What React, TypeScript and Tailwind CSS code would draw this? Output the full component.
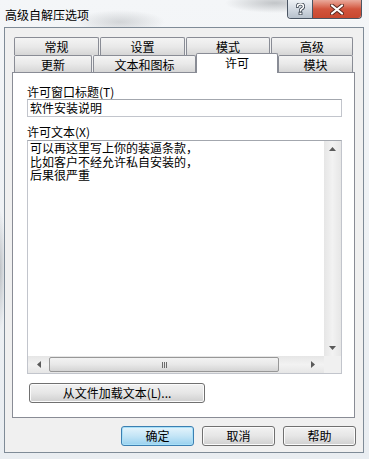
import React from 'react';

const FONT = "font-['SimSun','Noto_Sans_CJK_SC',sans-serif]";

function Tab({ label, w, ml = '' }: { label: string; w: string; ml?: string }) {
  return (
    <div
      className={`${w} ${ml} flex h-full items-center justify-center rounded-t-[2px] border border-b-0 border-[#898c95] bg-gradient-to-b from-[#f4f4f4] via-[#e9e9e9] to-[#d6d6d6] pt-[1px]`}
    >
      {label}
    </div>
  );
}

function WinButton({ label, primary = false, w }: { label: string; primary?: boolean; w: string }) {
  return (
    <div
      className={`${w} flex h-[20px] items-center justify-center rounded-[3px] border ${
        primary
          ? 'border-[#3c7fb1] bg-gradient-to-b from-[#e5f4fc] via-[#c4e5f6] to-[#98d1ef] shadow-[inset_0_0_0_1px_#a8e0f8]'
          : 'border-[#707070] bg-gradient-to-b from-[#f2f2f2] via-[#e6e6e6] to-[#cfcfcf] shadow-[inset_0_0_0_1px_#fbfbfb]'
      }`}
    >
      {label}
    </div>
  );
}

function Arrow({ dir }: { dir: 'up' | 'down' | 'left' | 'right' }) {
  const pts = {
    up: '0,4 3.5,0 7,4',
    down: '0,0 3.5,4 7,0',
    left: '4,0 0,3.5 4,7',
    right: '0,0 4,3.5 0,7',
  }[dir];
  const vertical = dir === 'up' || dir === 'down';
  return (
    <svg width={vertical ? 7 : 4} height={vertical ? 4 : 7} viewBox={vertical ? '0 0 7 4' : '0 0 4 7'}>
      <polygon points={pts} fill="#5a5a5a" />
    </svg>
  );
}

export default function App() {
  return (
    <div
      className={`${FONT} flex h-[459px] w-[369px] flex-col overflow-hidden text-[12px] leading-[14px] text-black bg-[radial-gradient(ellipse_45px_12px_at_120px_22px,rgba(110,115,120,0.25),transparent),radial-gradient(ellipse_50px_10px_at_275px_3px,rgba(100,105,110,0.35),transparent),radial-gradient(ellipse_6px_60px_at_0px_270px,rgba(100,105,110,0.35),transparent),linear-gradient(180deg,#f4f6f8,#e9edf1)]`}
    >
      {/* title bar */}
      <div className="flex h-[27px] shrink-0 items-start">
        <div className="pl-[5px] pt-[8px] text-[12px] leading-[14px] text-black">高级自解压选项</div>
        <div className="ml-auto mr-[7px] flex h-[19px] overflow-hidden rounded-b-[4px] border border-t-0 border-[#4a5563] shadow-[0_1px_1px_rgba(255,255,255,0.8)]">
          <div className="flex w-[25px] items-center justify-center border-r border-[#4a5563] bg-gradient-to-b from-[#eef2f6] via-[#d3dae2] to-[#b7c1cc]">
            <svg width="9" height="12" viewBox="0 0 9 12">
              <path
                d="M1.5 3.5 Q1.5 1 4.5 1 Q7.5 1 7.5 3.5 Q7.5 5 5.5 6 Q4.5 6.5 4.5 8"
                fill="none"
                stroke="#3a4450"
                strokeWidth="3.2"
                strokeLinecap="round"
              />
              <path
                d="M1.5 3.5 Q1.5 1 4.5 1 Q7.5 1 7.5 3.5 Q7.5 5 5.5 6 Q4.5 6.5 4.5 8"
                fill="none"
                stroke="#fff"
                strokeWidth="1.6"
                strokeLinecap="round"
              />
              <rect x="3" y="9.2" width="3" height="2.6" fill="#fff" stroke="#3a4450" strokeWidth="0.8" />
            </svg>
          </div>
          <div className="flex w-[48px] items-center justify-center bg-gradient-to-b from-[#e9a99b] via-[#d2543d] to-[#c8482f]">
            <svg width="14" height="11" viewBox="0 0 14 11">
              <path d="M2 1.5 L12 9.5 M12 1.5 L2 9.5" stroke="#5a2a22" strokeWidth="4" strokeLinecap="round" />
              <path d="M2 1.5 L12 9.5 M12 1.5 L2 9.5" stroke="#fff" strokeWidth="2.2" strokeLinecap="round" />
            </svg>
          </div>
        </div>
      </div>

      {/* client area */}
      <div className="ml-[4px] flex h-[426px] w-[360px] shrink-0 flex-col border border-[#7f8b97] bg-[#f0f0f0]">
        <div className="ml-[7px] mt-[9px] flex w-[343px] flex-col">
          {/* back row */}
          <div className="flex h-[18px] gap-[1px] pl-[2px]">
            <Tab label="常规" w="w-[85px]" />
            <Tab label="设置" w="w-[85px]" />
            <Tab label="模式" w="w-[84px]" />
            <Tab label="高级" w="w-[82px]" />
          </div>
          {/* front row */}
          <div className="flex h-[17px] items-end pl-[2px]">
            <Tab label="更新" w="w-[78px]" />
            <Tab label="文本和图标" w="w-[103px]" ml="ml-[1px]" />
            <div className="relative z-10 -mb-[1px] flex h-[20px] w-[82px] items-start justify-center rounded-t-[2px] border border-b-0 border-[#898c95] bg-white pt-[2px]">
              许可
            </div>
            <Tab label="模块" w="w-[75px]" />
          </div>

          {/* panel */}
          <div className="flex h-[346px] flex-col border border-[#898c95] bg-white pl-[14px]">
            <div className="mt-[12px] h-[14px]">许可窗口标题(T)</div>
            <div className="flex h-[18px] w-[315px] items-center border border-[#c2c5cc] border-t-[#a3a7ae] pl-[2px]">
              软件安装说明
            </div>
            <div className="mt-[8px] h-[14px]">许可文本(X)</div>
            <div className="mt-[1px] grid h-[234px] w-[315px] grid-cols-[1fr_17px] grid-rows-[1fr_17px] border border-[#c2c5cc] border-t-[#a3a7ae]">
              <div className="pl-[2px] leading-[13.5px]">
                可以再这里写上你的装逼条款，
                <br />
                比如客户不经允许私自安装的，
                <br />
                后果很严重
              </div>
              {/* vertical scrollbar */}
              <div className="flex flex-col items-center justify-between bg-gradient-to-r from-[#e6e6e6] via-[#f2f2f2] to-[#e6e6e6] py-[6px]">
                <Arrow dir="up" />
                <Arrow dir="down" />
              </div>
              {/* horizontal scrollbar */}
              <div className="flex items-center bg-gradient-to-b from-[#e6e6e6] via-[#f2f2f2] to-[#e6e6e6]">
                <div className="flex w-[21px] justify-center">
                  <Arrow dir="left" />
                </div>
                <div className="flex h-[15px] w-[230px] items-center justify-center rounded-[2px] border border-[#979797] bg-gradient-to-b from-[#f3f3f3] via-[#e8e8e8] to-[#d4d4d4]">
                  <div className="flex gap-[1px]">
                    <div className="h-[6px] w-[1px] bg-[#6b6b6b]" />
                    <div className="h-[6px] w-[1px] bg-[#6b6b6b]" />
                    <div className="h-[6px] w-[1px] bg-[#6b6b6b]" />
                  </div>
                </div>
                <div className="flex flex-1 justify-end pr-[9px]">
                  <Arrow dir="right" />
                </div>
              </div>
              <div className="bg-[#f0f0f0]" />
            </div>
            <div className="ml-[2px] mt-[9px]">
              <WinButton label="从文件加载文本(L)..." w="w-[176px]" />
            </div>
          </div>
        </div>

        {/* dialog buttons */}
        <div className="mr-[7px] mt-[8px] flex justify-end gap-[8px]">
          <WinButton label="确定" primary w="w-[73px]" />
          <WinButton label="取消" w="w-[73px]" />
          <WinButton label="帮助" w="w-[73px]" />
        </div>
      </div>
    </div>
  );
}
